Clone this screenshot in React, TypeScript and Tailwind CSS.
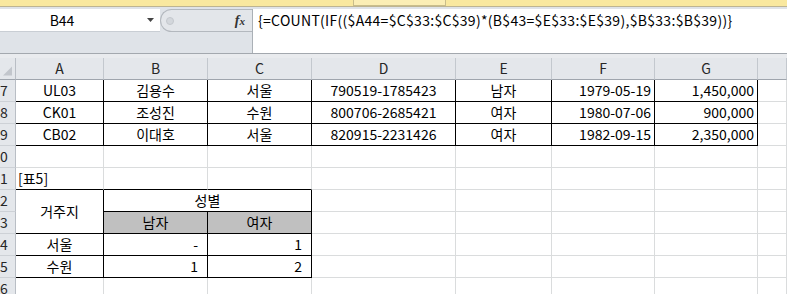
import clsx from "clsx";

type Align = "l" | "c" | "r" | "a";

interface CellProps {
  text?: string;
  align?: Align;
  rb?: boolean;
  bb?: boolean;
  className?: string;
}

function Cell({ text, align = "c", rb, bb, className }: CellProps) {
  return (
    <div
      className={clsx(
        "flex items-center whitespace-nowrap border-r border-b text-[14px] text-black",
        rb ? "border-r-black" : "border-r-[#dadcdd]",
        bb ? "border-b-black" : "border-b-[#dadcdd]",
        align === "c" && "justify-center",
        align === "r" && "justify-end pr-[3px]",
        align === "a" && "justify-end pr-[9px]",
        align === "l" && "justify-start pl-[2px]",
        className,
      )}
    >
      {text}
    </div>
  );
}

function RowHead({ n }: { n: string }) {
  return (
    <div className="flex items-center justify-start overflow-hidden border-r border-b border-r-[#b9bec5] border-b-[#cdd1d6] bg-[#e4e7eb] text-[14px] text-[#262626]">
      {n}
    </div>
  );
}

const people = [
  ["UL03", "김용수", "서울", "790519-1785423", "남자", "1979-05-19", "1,450,000"],
  ["CK01", "조성진", "수원", "800706-2685421", "여자", "1980-07-06", "900,000"],
  ["CB02", "이대호", "서울", "820915-2231426", "여자", "1982-09-15", "2,350,000"],
];
const peopleAlign: Align[] = ["c", "c", "c", "c", "c", "r", "r"];

function Blank({ count }: { count: number }) {
  return (
    <>
      {Array.from({ length: count }).map((_, i) => (
        <Cell key={i} />
      ))}
    </>
  );
}

export default function App() {
  return (
    <div className="h-[294px] w-[787px] overflow-hidden bg-white font-['Noto_Sans_CJK_KR',sans-serif]">
      {/* ribbon edge */}
      <div className="flex h-[7px] border-b border-[#bdb492] bg-[#f9e89f] pl-[353px]">
        <div className="h-[6px] w-[93px] border-x border-b border-[#c9bd8a] bg-[#fbeeb5]" />
      </div>

      {/* formula bar */}
      <div className="flex h-[47px] border-b border-[#a3a8ae] bg-[#dfe3e8] pt-[2px]">
        <div className="flex w-[252px] flex-col">
          <div className="flex h-[23px]">
            <div className="flex w-[160px] items-center border-b border-[#c9ced4] bg-white">
              <span className="w-[124px] text-center text-[14px] text-black">B44</span>
              <svg width="8" height="4" viewBox="0 0 8 4" className="ml-[23px]">
                <path d="M0 0H7L3.5 4Z" fill="#444" />
              </svg>
            </div>
            <div className="flex flex-1 items-center rounded-l-full border border-r-0 border-[#b3b8be] bg-[#e3e6ea]">
              <div className="ml-[5px] h-[8px] w-[8px] rounded-full border border-[#c4c8cd] bg-[#d3d7dc]" />
              <span className="ml-auto mr-[7px] font-['Liberation_Serif',serif] text-[14px] font-bold italic text-[#333]">
                f<span className="text-[11px]">x</span>
              </span>
            </div>
          </div>
        </div>
        <div className="flex-1 border-l border-[#aab0b6] bg-white pl-[5px] pt-[1px] text-[14px] leading-[20px] tracking-[0.3px] text-black">
          {"{=COUNT(IF(($A44=$C$33:$C$39)*(B$43=$E$33:$E$39),$B$33:$B$39))}"}
        </div>
      </div>
      <div className="h-[4px] bg-[#e9ebee]" />

      {/* sheet */}
      <div className="grid grid-cols-[16px_88px_104px_104px_144px_96px_103px_103px_29px] auto-rows-[22px]">
        {/* column headers */}
        <div className="flex items-end justify-end border-r border-b border-r-[#b9bec5] border-b-[#9fa5ad] bg-[#e4e7eb] p-[3px]">
          <svg width="10" height="10" viewBox="0 0 10 10">
            <path d="M10 0V10H0Z" fill="#c2c6cc" />
          </svg>
        </div>
        {["A", "B", "C", "D", "E", "F", "G", ""].map((c, i) => (
          <div
            key={i}
            className="flex items-center justify-center border-r border-b border-r-[#c3c8ce] border-b-[#9fa5ad] bg-[#e4e7eb] text-[14px] text-[#262626]"
          >
            {c}
          </div>
        ))}

        {/* rows 37-39 */}
        {people.map((row, ri) => (
          <div key={ri} className="contents">
            <RowHead n={String((ri + 7) % 10)} />
            {row.map((v, ci) => (
              <Cell key={ci} text={v} align={peopleAlign[ci]} rb bb />
            ))}
            <Cell />
          </div>
        ))}

        {/* row 40 */}
        <RowHead n="0" />
        <Blank count={8} />

        {/* row 41 */}
        <RowHead n="1" />
        <Cell text="[표5]" align="l" bb />
        <Cell bb />
        <Cell bb />
        <Blank count={5} />

        {/* row 42 */}
        <RowHead n="2" />
        <Cell text="거주지" rb bb className="row-span-2" />
        <Cell text="성별" rb bb className="col-span-2" />
        <Blank count={5} />

        {/* row 43 */}
        <RowHead n="3" />
        <Cell text="남자" rb bb className="bg-[#c0c0c0]" />
        <Cell text="여자" rb bb className="bg-[#c0c0c0]" />
        <Blank count={5} />

        {/* row 44 */}
        <RowHead n="4" />
        <Cell text="서울" rb bb />
        <Cell text="-" align="a" rb bb />
        <Cell text="1" align="a" rb bb />
        <Blank count={5} />

        {/* row 45 */}
        <RowHead n="5" />
        <Cell text="수원" rb bb />
        <Cell text="1" align="a" rb bb />
        <Cell text="2" align="a" rb bb />
        <Blank count={5} />

        {/* row 46 */}
        <RowHead n="6" />
        <Blank count={8} />
      </div>
    </div>
  );
}
